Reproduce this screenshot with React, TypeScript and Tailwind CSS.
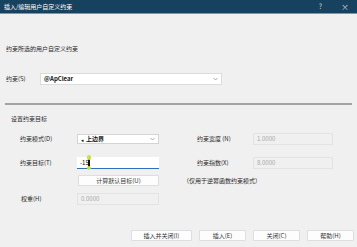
import React from 'react';

const font = { fontFamily: '"Noto Sans CJK SC", "Noto Sans", sans-serif' };

const ReadField = ({ value, width }: { value: string; width: string }) => (
  <div className={`${width} h-[12px] border border-[#e3e3e3] flex items-center pl-[3px] text-[#a8a8a8]`}>{value}</div>
);

const Chevron = () => (
  <svg width="5" height="4" viewBox="0 0 5 4" className="ml-auto mr-[3px]">
    <path d="M0.5 1 L2.5 3 L4.5 1" fill="none" stroke="#777" strokeWidth="0.6" />
  </svg>
);

const DialogButton = ({ label, width }: { label: string; width: string }) => (
  <button className={`${width} h-[11px] bg-[#fdfdfd] border border-[#dedede] rounded-[1px] text-[6px] leading-none text-[#333] flex items-center justify-center`}>
    {label}
  </button>
);

export default function App() {
  return (
    <div className="w-[357px] h-[247px] bg-[#f0f0f0] flex flex-col text-[6px] leading-none text-[#2a2a2a] overflow-hidden" style={font}>
      {/* title bar */}
      <div className="h-[13px] bg-[#17425f] flex items-center pl-[4px] text-white text-[6px]">
        <span>插入/编辑用户自定义约束</span>
        <span className="ml-auto text-[#c8d3dc] text-[7px]">?</span>
        <span className="ml-[19px] mr-[8px] text-[#c8d3dc] text-[8px]">×</span>
      </div>
      <div className="h-[1px] bg-[#7d96a8]" />

      <div className="mt-[30px] h-[10px] flex items-center pl-[6px]">约束所选的用户自定义约束</div>

      <div className="mt-[19px] h-[12px] flex items-center pl-[6px]">
        <span className="w-[34px]">约束(S)</span>
        <div className="w-[182px] h-[12px] bg-white border border-[#dcdcdc] flex items-center pl-[3px] font-bold text-[#111]">
          @ApClear
          <Chevron />
        </div>
      </div>

      <div className="mt-[18px] mx-[5px] h-[2px] bg-[#a3a3a3]" />

      <div className="mt-[9px] h-[10px] flex items-center pl-[11px]">设置约束目标</div>

      {/* row 1 */}
      <div className="mt-[9px] h-[12px] flex items-center pl-[20px]">
        <span className="w-[57px]">约束模式(D)</span>
        <div className="w-[82px] h-[10px] bg-white border border-[#d4d4d4] flex items-center pl-[3px] text-[#111]">
          <span className="text-[5px] mr-[2px]">◂</span>
          <span className="font-bold">上边界</span>
          <Chevron />
        </div>
        <span className="ml-[38px] w-[56px]">约束宽度 (N)</span>
        <ReadField value="1.0000" width="w-[80px]" />
      </div>

      {/* row 2 */}
      <div className="mt-[12px] h-[12px] flex items-center pl-[20px]">
        <span className="w-[57px]">约束目标(T)</span>
        <div className="relative w-[82px] h-[12px] bg-white border-b-[1.5px] border-[#2f6fc0] flex items-center pl-[3px] text-[#111]">
          -15
          <div className="absolute left-[11px] top-[1px] w-[1.5px] h-[9px] bg-[#111]" />
          <div className="absolute left-[9.5px] top-[-2px] w-[4.5px] h-[4.5px] rounded-full bg-[#c9e23a]" />
          <div className="absolute left-[9.5px] top-[8.5px] w-[4.5px] h-[4.5px] rounded-full bg-[#c9e23a]" />
        </div>
        <span className="ml-[38px] w-[56px]">约束指数(X)</span>
        <ReadField value="8.0000" width="w-[80px]" />
      </div>

      {/* row 3 */}
      <div className="mt-[6px] h-[11px] flex items-center pl-[78px]">
        <DialogButton label="计算默认目标(U)" width="w-[81px]" />
        <span className="ml-[24px]">（仅用于逆幂函数约束模式）</span>
      </div>

      {/* row 4 */}
      <div className="mt-[7px] h-[12px] flex items-center pl-[21px]">
        <span className="w-[56px]">权重(H)</span>
        <ReadField value="0.0000" width="w-[82px]" />
      </div>

      {/* footer buttons */}
      <div className="mt-[25px] flex justify-end gap-[7px] pr-[3px]">
        <DialogButton label="插入并关闭(I)" width="w-[61px]" />
        <DialogButton label="插入(E)" width="w-[47px]" />
        <DialogButton label="关闭(C)" width="w-[47px]" />
        <DialogButton label="帮助(H)" width="w-[47px]" />
      </div>
    </div>
  );
}
